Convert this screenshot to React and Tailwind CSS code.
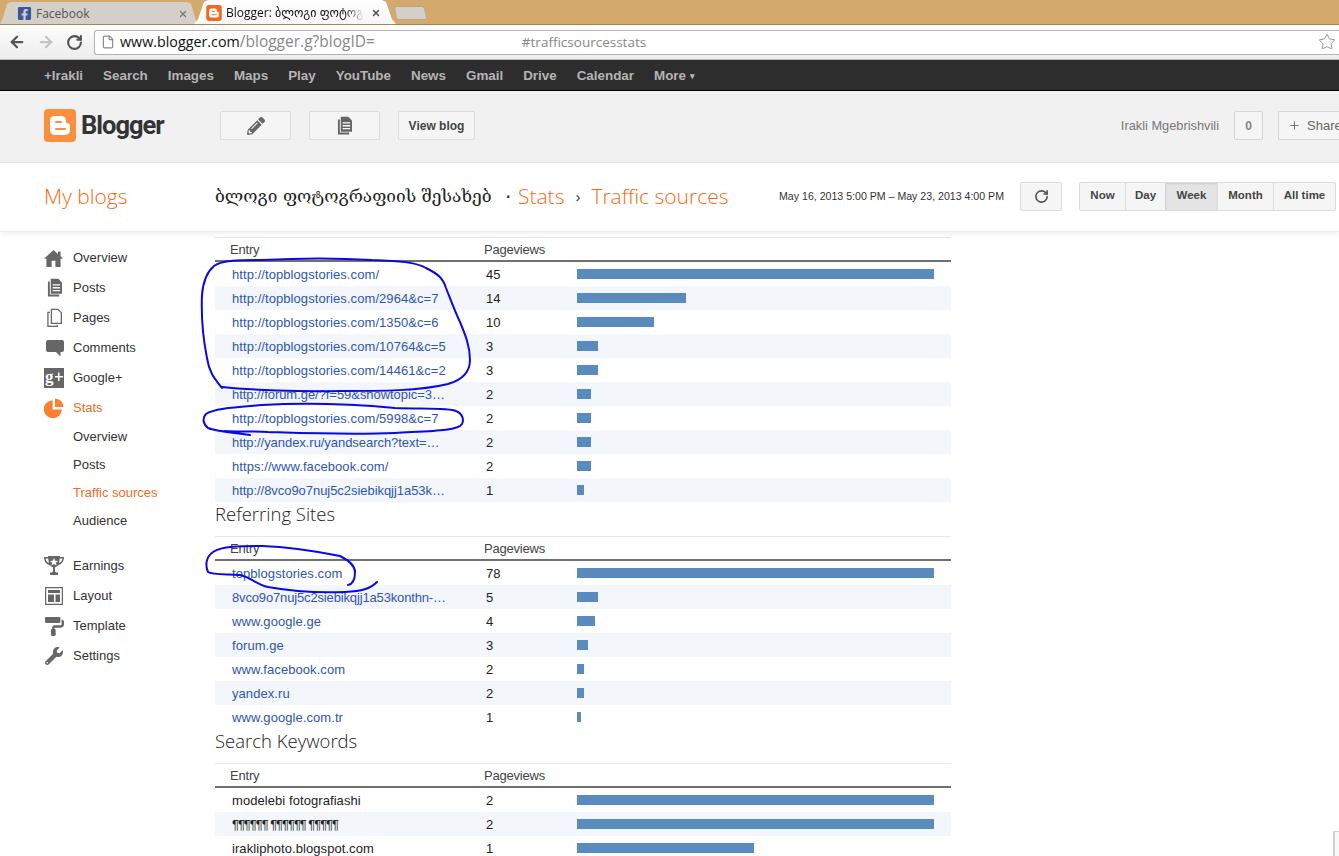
import React from "react";
import { ArrowLeft, ArrowRight, RotateCw, Star, File, X, Plus } from "lucide-react";
import { FaFacebookSquare, FaPencilAlt, FaPaintRoller, FaWrench } from "react-icons/fa";

const gbar = ["+Irakli", "Search", "Images", "Maps", "Play", "YouTube", "News", "Gmail", "Drive", "Calendar"];

function HomeIcon({ className }) {
  return (
    <svg viewBox="0 0 20 18" className={className} fill="#666">
      <path d="M10 0L14.800 4.300V1.500h2.700V6.700L20 9.200H17.500V18H12V11.500H8V18H2.500V9.200H0z" />
    </svg>
  );
}
function CommentIcon({ className }) {
  return (
    <svg viewBox="0 0 18 17" className={className} fill="#666">
      <path d="M2 0h14a2 2 0 0 1 2 2v8a2 2 0 0 1-2 2h-1.500v4.500L10 12H2a2 2 0 0 1-2-2V2a2 2 0 0 1 2-2z" />
    </svg>
  );
}
function GplusIcon({ className }) {
  return (
    <svg viewBox="0 0 20 20" className={className}>
      <rect width="20" height="20" fill="#666" />
      <text x="1" y="14" fontSize="17" fontWeight="700" fontFamily="Liberation Serif, serif" fill="#fff">g</text>
      <path d="M14 4.500h1.500V8H19v1.500h-3.500V13H14V9.500h-3V8h3z" fill="#fff" />
    </svg>
  );
}
function TrophyIcon({ className }) {
  return (
    <svg viewBox="0 0 20 20" className={className} fill="#666">
      <path d="M4 0h12v1h4c0 4-2 7-5.500 8C13.500 10 12 11 11 11.500V15c0 1 1 1.500 3 1.500v2.500H6v-2.500C8 16.500 9 16 9 15v-3.500C8 11 6.500 10 5.500 9 2 8 0 5 0 1h4z" />
      <path d="M1.500 2.500h2.700c.2 2 .6 3.500 1 4.500C3 6.500 1.800 4.500 1.500 2.500zM18.500 2.500h-2.700c-.2 2-.6 3.500-1 4.500 2.200-.5 3.400-2.500 3.700-4.500z" fill="#fff" />
      <path d="M10 2l1.200 2.800 2.800.2-2.200 1.800.8 2.700L10 8l-2.600 1.500.8-2.700L6 5l2.800-.2z" fill="#fff" />
    </svg>
  );
}
function PostsIcon({ className }) {
  return (
    <svg viewBox="0 0 16 20" className={className} fill="#666">
      <path d="M4 0h8l4 4v12H4z" />
      <path d="M1 3h2v14h10v2H1z" />
      <path d="M6 6h8v1.400H6zM6 9h8v1.400H6zM6 12h8v1.400H6z" fill="#fff" />
    </svg>
  );
}
function PagesIcon({ className }) {
  return (
    <svg viewBox="0 0 16 20" className={className} fill="none" stroke="#666" strokeWidth="1.4">
      <path d="M4.700.7h7l3.600 3.600v11.400H4.700z" />
      <path d="M3 4H1v15h10v-1.600" />
    </svg>
  );
}
function PieIcon({ className }) {
  return (
    <svg viewBox="0 0 20 20" className={className} fill="#fb8130">
      <path d="M8.600 2.200v9.200h9.200A9 9 0 1 1 8.600 2.200z" />
      <path d="M11 .5a8.800 8.800 0 0 1 8.500 8.500H11z" />
    </svg>
  );
}
function LayoutIcon({ className }) {
  return (
    <svg viewBox="0 0 18 18" className={className} fill="#666">
      <path fillRule="evenodd" d="M0 0h18v18H0zM1.200 1.200v15.600h15.600V1.200z" />
      <path d="M3 3h12v3H3zM3 7.500h6V15H3zM10.500 7.500H15V15h-4.500z" />
    </svg>
  );
}
function BloggerLogo() {
  return (
    <svg viewBox="0 0 32 33" className="w-8 h-[33px]">
      <rect width="32" height="33" rx="4" fill="#fb8f3d" />
      <path d="M10.500 7h6.500c3 0 5 2 5 4.600v1.400c0 .8.700 1.300 1.400 1.300 1.400 0 2.600.7 2.600 2.200V21c0 3-2.300 5-5 5H11c-2.800 0-5-2.200-5-5V11.500C6 9 8 7 10.500 7z" fill="#fff" />
      <rect x="11" y="12" width="7" height="2" rx="1" fill="#fb8f3d" />
      <rect x="11" y="19" width="11" height="2" rx="1" fill="#fb8f3d" />
    </svg>
  );
}

const navTop = [
  ["Overview", <HomeIcon className="w-[19px] h-[17px]" />],
  ["Posts", <PostsIcon className="w-[15px] h-[20px] ml-[3px]" />],
  ["Pages", <PagesIcon className="w-[15px] h-[20px] ml-[3px]" />],
  ["Comments", <CommentIcon className="w-[18px] h-[17px] ml-[2px]" />],
  ["Google+", <GplusIcon className="w-[20px] h-[20px]" />],
];
const navBottom = [
  ["Earnings", <TrophyIcon className="w-[20px] h-[20px]" />],
  ["Layout", <LayoutIcon className="w-[18px] h-[18px] ml-[1px]" />],
  ["Template", <FaPaintRoller className="w-[19px] h-[19px] ml-[1px] text-[#666]" />],
  ["Settings", <FaWrench className="w-[18px] h-[18px] ml-[1px] text-[#666]" />],
];

function NavItem({ label, icon, active }) {
  return (
    <div className={`h-[30px] flex items-center text-[13px] ${active ? "text-[#f26a1f]" : "text-[#333]"}`}>
      <div className="w-[29px] flex items-center">{icon}</div>
      <span>{label}</span>
    </div>
  );
}

function Table({ rows, plain }) {
  return (
    <div className="border-t border-[#e8e8e8]">
      <div className="h-[22px] flex items-center text-[13px] tracking-[-0.2px] text-[#444] border-b-2 border-[#707070] box-content">
        <div className="w-[269px] pl-[15px] pt-[1px]">Entry</div>
        <div className="pt-[1px]">Pageviews</div>
      </div>
      {rows.map(([label, n, w, cls], i) => (
        <div key={i} className={`h-6 flex items-center text-[13px] ${i % 2 ? "bg-[#f3f6fb]" : ""}`}>
          <div className={`w-[269px] pl-[17px] pr-[6px] pt-[1px] whitespace-nowrap overflow-hidden ${plain ? "text-[#222]" : "text-[#2f55b5]"} ${cls || "tracking-[0.07px]"}`}>{label}</div>
          <div className="w-[93px] pl-[2px] pt-[1px] text-[#222]">{n}</div>
          <div className="h-[10px] bg-[#5a8bbf]" style={{ width: w }} />
        </div>
      ))}
    </div>
  );
}

const t1 = [
  ["http://topblogstories.com/", 45, 357],
  ["http://topblogstories.com/2964&c=7", 14, 109],
  ["http://topblogstories.com/1350&c=6", 10, 77],
  ["http://topblogstories.com/10764&c=5", 3, 21],
  ["http://topblogstories.com/14461&c=2", 3, 21],
  ["http://forum.ge/?f=59&showtopic=3…", 2, 14, "tracking-[-0.05px]"],
  ["http://topblogstories.com/5998&c=7", 2, 14],
  ["http://yandex.ru/yandsearch?text=…", 2, 14, "tracking-[-0.05px]"],
  ["https://www.facebook.com/", 2, 14],
  ["http://8vco9o7nuj5c2siebikqjj1a53k…", 1, 7, "tracking-[-0.05px]"],
];
const t2 = [
  ["topblogstories.com", 78, 357],
  ["8vco9o7nuj5c2siebikqjj1a53konthn-…", 5, 21, "tracking-[-0.15px]"],
  ["www.google.ge", 4, 18],
  ["forum.ge", 3, 11],
  ["www.facebook.com", 2, 7],
  ["yandex.ru", 2, 7],
  ["www.google.com.tr", 1, 4],
];
const t3 = [
  ["modelebi fotografiashi", 2, 357],
  ["¶¶¶¶¶¶ ¶¶¶¶¶¶ ¶¶¶¶¶", 2, 357, "tracking-[-1.05px]"],
  ["irakliphoto.blogspot.com", 1, 177],
];

export default function App() {
  return (
    <div className="relative w-[1339px] h-[856px] overflow-hidden bg-white font-['Liberation_Sans',sans-serif]">
      {/* tab strip */}
      <div className="h-[25px] bg-[#d3a96c] border-b border-[#a58650] flex items-end relative">
        <div className="w-[200px] h-[22px] bg-[#d4cfc9] [clip-path:polygon(0_100%,3px_70%,7px_8%,11px_0,187px_0,191px_8%,197px_100%)] flex items-center pl-[17px] pr-[12px] pt-[1px] font-['Open_Sans',sans-serif] text-xs text-[#555] shrink-0">
          <FaFacebookSquare className="w-[15px] h-[15px] text-[#3b5998] mr-[4px]" />
          <span className="flex-1">Facebook</span>
          <X size={10} strokeWidth={3} className="text-[#777]" />
        </div>
        <div className="-ml-[6px] w-[204px] h-[24px] bg-gradient-to-b from-white to-[#f6f6f6] [clip-path:polygon(0_100%,4px_80%,10px_8%,14px_0,188px_0,192px_8%,198px_80%,202px_100%)] flex items-center pl-[12px] pr-[17px] pt-[1px] text-xs text-[#111] font-['Open_Sans','DejaVu_Sans',sans-serif] shrink-0">
          <svg viewBox="0 0 32 33" className="w-[16px] h-[16px] mr-[4px] shrink-0">
            <rect width="32" height="33" rx="5" fill="#f26a1f" />
            <path d="M11 7h7c3 0 4 2 4 4v2c0 1 1 1 2 1 2 0 2 1 2 3v4c0 3-2 5-5 5H11c-3 0-5-2-5-5V12c0-3 2-5 5-5z" fill="#fff" />
            <rect x="11" y="12" width="7" height="2" fill="#f26a1f" />
            <rect x="11" y="19" width="11" height="2" fill="#f26a1f" />
          </svg>
          <span className="flex-1 whitespace-nowrap overflow-hidden [mask-image:linear-gradient(to_right,black_85%,transparent)]">Blogger: ბლოგი ფოტოგრაფიის შესახებ</span>
          <X size={10} strokeWidth={3.5} className="text-[#555] ml-[6px]" />
        </div>
        <div className="ml-[-3px] mb-[4px] w-[31px] h-[14px] bg-[#d4cfc9] border border-[#b5a58a] rounded-t-[3px] rounded-b-[2px] skew-x-[12deg] shrink-0" />
      </div>
      {/* toolbar */}
      <div className="h-[35px] bg-gradient-to-b from-[#fdfdfd] to-[#ececec] flex items-center border-b border-[#bbb]">
        <div className="w-[94px] flex items-center pl-[8px] gap-[11px] shrink-0">
          <ArrowLeft size={18} strokeWidth={3} className="text-[#555]" />
          <ArrowRight size={18} strokeWidth={3} className="text-[#c4c4c4]" />
          <RotateCw size={17} strokeWidth={3} className="text-[#555]" />
        </div>
        <div className="flex-1 h-[25px] bg-white border border-r-0 border-[#b5b5b5] rounded-l-[3px] flex items-center pl-[6px] font-['Open_Sans',sans-serif] text-[#888]">
          <File size={14} className="text-[#888] mr-[5px]" />
          <span className="text-[#111] text-[14.300px]">www.blogger.com</span>
          <span className="text-[15.500px]">/blogger.g?blogID=</span>
          <span className="ml-[147px] text-[13.500px]">#trafficsourcesstats</span>
          <span className="flex-1" />
          <Star size={18} strokeWidth={1.2} className="text-[#888] mr-[3px]" />
        </div>
      </div>
      {/* google bar */}
      <div className="h-[31px] bg-[#2d2d2d] border-b border-black flex items-center pl-[44px] pt-[2px] gap-[20px] text-[13.400px] font-bold text-[#b5b5b5]">
        {gbar.map((g) => (<span key={g}>{g}</span>))}
        <span>More <span className="text-[9px] align-[1px]">▾</span></span>
      </div>
      {/* blogger header */}
      <div className="h-[72px] bg-[#f1f1f1] border-b border-[#e5e5e5] flex items-center pl-[44px] pb-[2px]">
        <BloggerLogo />
        <span className="ml-[5px] w-[139px] font-['Roboto',sans-serif] font-bold text-[25.500px] text-[#333] tracking-[-1px]">Blogger</span>
        <div className="w-[71px] h-[29px] border border-[#dcdcdc] rounded-[2px] bg-[#f5f5f5] flex items-center justify-center">
          <FaPencilAlt className="w-[18px] h-[18px] text-[#666]" />
        </div>
        <div className="ml-[18px] w-[71px] h-[29px] border border-[#dcdcdc] rounded-[2px] bg-[#f5f5f5] flex items-center justify-center">
          <PostsIcon className="w-[15px] h-[20px]" />
        </div>
        <div className="ml-[18px] w-[77px] h-[29px] border border-[#dcdcdc] rounded-[2px] bg-[#f5f5f5] flex items-center justify-center text-xs font-bold text-[#444]">View blog</div>
        <div className="flex-1" />
        <span className="text-[12.800px] text-[#777] mr-[15px] pt-[1px]">Irakli Mgebrishvili</span>
        <div className="w-[29px] h-[29px] border border-[#d5d5d5] rounded-[2px] bg-[#f5f5f5] flex items-center justify-center text-xs font-bold text-[#888] mr-[15px]">0</div>
        <div className="w-[61px] h-[29px] border border-r-0 border-[#d5d5d5] rounded-l-[2px] bg-[#f5f5f5] flex items-center pl-[9px] text-[13px] text-[#666] whitespace-nowrap overflow-hidden shrink-0">
          <Plus size={13} strokeWidth={2} className="text-[#777] mr-[6px] shrink-0" />
          <span>Share</span>
        </div>
      </div>
      {/* title row */}
      <div className="h-[69px] bg-white border-b border-[#ebebeb] flex items-center shadow-[0_3px_5px_rgba(0,0,0,0.05)] relative">
        <div className="w-[215px] pl-[44px] font-['Open_Sans',sans-serif] font-light text-[21px] text-[#f96a10]">My blogs</div>
        <span className="w-[291px] text-[17.300px] text-[#222] font-['DejaVu_Serif','DejaVu_Sans',serif] whitespace-nowrap">ბლოგი ფოტოგრაფიის შესახებ</span>
        <span className="w-[12px] font-bold text-[#333]">·</span>
        <span className="font-['Open_Sans',sans-serif] font-light text-[21px] text-[#f96a10]">Stats</span>
        <span className="w-[27px] text-center text-[15px] text-[#333]">›</span>
        <span className="font-['Open_Sans',sans-serif] font-light text-[21px] text-[#f96a10] whitespace-nowrap">Traffic sources</span>
        <span className="flex-1" />
        <span className="text-[10.600px] text-[#333] whitespace-nowrap">May 16, 2013 5:00 PM – May 23, 2013 4:00 PM</span>
        <div className="ml-[16px] mb-[2px] w-[42px] h-[29px] border border-[#dcdcdc] rounded-[2px] bg-[#f5f5f5] flex items-center justify-center">
          <RotateCw size={15} strokeWidth={2.6} className="text-[#555]" />
        </div>
        <div className="ml-[17px] mr-[3px] mb-[2px] h-[29px] flex border border-[#dcdcdc] rounded-[2px] bg-[#f5f5f5] text-[11.500px] font-bold text-[#444]">
          <div className="w-[45px] flex items-center justify-center">Now</div>
          <div className="w-[40px] flex items-center justify-center border-l border-[#dcdcdc]">Day</div>
          <div className="w-[52px] flex items-center justify-center border-l border-[#d0d0d0] bg-[#e4e4e4] shadow-[inset_0_1px_2px_rgba(0,0,0,0.1)]">Week</div>
          <div className="w-[56px] flex items-center justify-center border-l border-[#dcdcdc]">Month</div>
          <div className="w-[62px] flex items-center justify-center border-l border-[#dcdcdc]">All time</div>
        </div>
      </div>
      {/* body */}
      <div className="flex">
        <div className="w-[215px] pl-[44px] pt-[11px] shrink-0">
          {navTop.map(([l, ic]) => (<NavItem key={l} label={l} icon={ic} />))}
          <NavItem label="Stats" icon={<PieIcon className="w-[20px] h-[20px]" />} active />
          <div className="pl-[29px] text-[13px] text-[#333]">
            <div className="h-7 flex items-center">Overview</div>
            <div className="h-7 flex items-center">Posts</div>
            <div className="h-7 flex items-center text-[#f26a1f]">Traffic sources</div>
            <div className="h-7 flex items-center">Audience</div>
          </div>
          <div className="h-4" />
          {navBottom.map(([l, ic]) => (<NavItem key={l} label={l} icon={ic} />))}
        </div>
        <div className="w-[736px] pt-[5px]">
          <Table rows={t1} />
          <div className="h-[34px] flex items-center font-['Open_Sans',sans-serif] font-light text-[18.500px] text-[#222] leading-none pb-[10px]">Referring Sites</div>
          <Table rows={t2} />
          <div className="h-[34px] flex items-center font-['Open_Sans',sans-serif] font-light text-[18.500px] text-[#222] leading-none pb-[10px]">Search Keywords</div>
          <Table rows={t3} plain />
        </div>
      </div>
      {/* hand-drawn marks over the page */}
      <svg className="absolute left-0 top-0 pointer-events-none" width="1339" height="856" fill="none" stroke="#0a0ae0" strokeWidth="2" strokeLinecap="round" strokeLinejoin="round">
        <path d="M222 388C214 378 209 372 207 358C203 338 201 318 202 295C203 282 207 272 214 266C222 260 240 260 262 260C300 258 340 258 372 260C398 261 416 262 426 268C438 274 443 278 446 288C450 298 455 312 460 322C465 334 470 346 470 360C470 372 462 380 448 384C420 391 380 391 340 391C300 392 250 390 222 387" />
        <path d="M250 435C235 433 215 431 208 428C203 424 202 418 206 414C214 408 240 407 262 405C300 403 350 404 395 408C425 409 450 408 456 411C463 414 464 420 462 424C458 431 430 431 395 433C350 435 300 433 268 432C250 431 232 432 225 431" />
        <path d="M377 582C370 589 362 591 345 592C320 593 290 591 268 587C256 584 250 577 240 575C228 574 212 575 208 572C205 565 206 557 213 552C222 546 240 546 262 546C290 547 320 552 340 556C350 561 355 566 355 572C355 580 353 584 348 585" />
      </svg>
      <div className="absolute left-[1333px] top-[831px] w-[6px] h-[25px] border-l-2 border-t border-[#d0d0d0] bg-[#f8f8f8]" />
    </div>
  );
}
